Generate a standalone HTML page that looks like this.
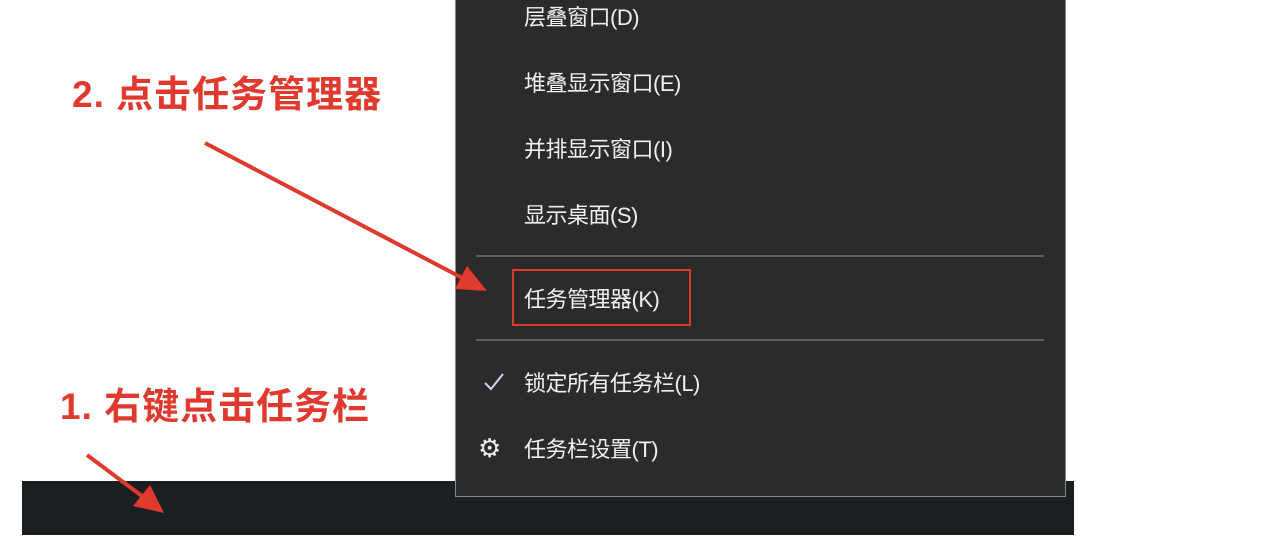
<!DOCTYPE html>
<html><head><meta charset="utf-8"><style>
body{margin:0;width:1268px;height:540px;background:#fff;position:relative;overflow:hidden;font-family:"Liberation Sans","Noto Sans CJK SC",sans-serif}
.tb{position:absolute;left:22px;top:481px;width:1052px;height:54px;background:#1c1f22}
.menu{position:absolute;left:455px;top:-2px;width:609px;height:497px;background:#2b2b2b;border:1px solid #8a8a8a}
.it{position:absolute;left:68px;color:#f0f0f0;font-size:22px;line-height:26px;letter-spacing:-0.5px}
.sep{position:absolute;left:20px;width:568px;height:2px;background:#5e5e5e}
.lbl{position:absolute;color:#e0392e;font-weight:bold;font-size:37px;letter-spacing:1px;font-family:"Liberation Sans","Noto Sans CJK SC",sans-serif}
</style></head><body>
<div class="tb"></div>
<div class="menu">
<div class="it" style="top:6px">层叠窗口(D)</div>
<div class="it" style="top:72px">堆叠显示窗口(E)</div>
<div class="it" style="top:138px">并排显示窗口(I)</div>
<div class="it" style="top:204px">显示桌面(S)</div>
<div class="sep" style="top:256px"></div>
<div style="position:absolute;left:56px;top:270px;width:179px;height:57px;border:2px solid #e0392e;box-sizing:border-box"></div>
<div class="it" style="top:288px">任务管理器(K)</div>
<div class="sep" style="top:340px"></div>
<svg style="position:absolute;left:27px;top:372px" width="22" height="20"><path d="M2 12 L8 18 L20 3" stroke="#c8d8f0" stroke-width="2" fill="none"/></svg>
<div class="it" style="top:372px">锁定所有任务栏(L)</div>
<div style="position:absolute;left:22px;top:436px;color:#eee;font-size:26px;line-height:26px">⚙</div>
<div class="it" style="top:438px">任务栏设置(T)</div>
</div>
<div class="lbl" style="left:72px;top:64px">2. 点击任务管理器</div>
<div class="lbl" style="left:60px;top:376px">1. 右键点击任务栏</div>
<svg style="position:absolute;left:0;top:0" width="1268" height="540">
<line x1="205" y1="143" x2="470" y2="282" stroke="#e0392e" stroke-width="4"/>
<polygon points="487,291 455,289 467,266" fill="#e0392e"/>
<line x1="87" y1="455" x2="150" y2="502" stroke="#e0392e" stroke-width="4"/>
<polygon points="164,513 133,506 150,485" fill="#e0392e"/>
</svg>
</body></html>
